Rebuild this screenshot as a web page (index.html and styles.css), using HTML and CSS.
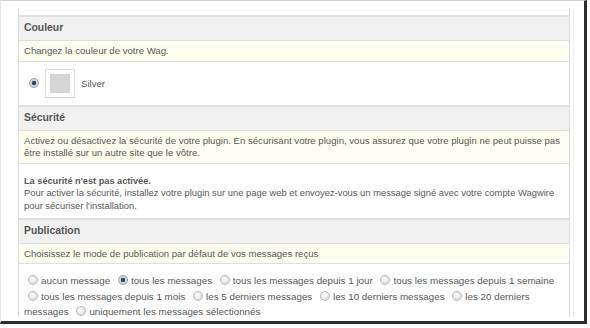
FILE: index.html
```html
<html>
<head>
    <title>Options</title>
    <link rel="stylesheet" href="styles.css">
</head>
<body>
    <div class="frame">
        <div class="outer">
            <div class="panel">
                <div class="head">Couleur</div>
                <div class="note">Changez la couleur de votre Wag.</div>
                <div class="row colors">
                    <span class="radio on"></span>
                    <span class="swatch"><span class="fill"></span></span>
                    <span>Silver</span>
                </div>

                <div class="head">Sécurité</div>
                <div class="note">Activez ou désactivez la sécurité de votre plugin. En sécurisant votre plugin, vous assurez que votre plugin ne peut puisse pas être installé sur un autre site que le vôtre.</div>
                <div class="row text">
                    <b>La sécurité n'est pas activée.</b><br>
                    Pour activer la sécurité, installez votre plugin sur une page web et envoyez-vous un message signé avec votre compte Wagwire pour sécuriser l'installation.
                </div>

                <div class="head">Publication</div>
                <div class="note">Choisissez le mode de publication par défaut de vos messages reçus</div>
                <div class="row options">
                    <label><span class="radio"></span>aucun message</label>
                    <label><span class="radio on"></span>tous les messages</label>
                    <label><span class="radio"></span>tous les messages depuis 1 jour</label>
                    <label><span class="radio"></span>tous les messages depuis 1 semaine</label>
                    <label><span class="radio"></span>tous les messages depuis 1 mois</label>
                    <label><span class="radio"></span>les 5 derniers messages</label>
                    <label><span class="radio"></span>les 10 derniers messages</label>
                    <label><span class="radio"></span>les 20 derniers messages</label>
                    <label><span class="radio"></span>uniquement les messages sélectionnés</label>
                </div>
            </div>
        </div>
    </div>
</body>
</html>
```

FILE: styles.css
```css
* {
    margin: 0px;
    box-sizing: border-box;
}

body {
    background: #ffffff;
    font-family: "Liberation Sans", Arial, sans-serif;
    font-size: 9.6px;
    color: #585858;
}

.frame {
    width: 587px;
    height: 324px;
    border-top: 1px solid #cfcfcf;
    border-left: 1px solid #e4e4e4;
    border-right: 3px solid #2e2e2e;
    border-bottom: 3px solid #2e2e2e;
    padding: 7px 0 0 17px;
    overflow: hidden;
}

.outer {
    width: 556px;
    height: 309px;
    border-right: 1px solid #ececec;
    padding-right: 3px;
}

.panel {
    width: 552px;
    height: 309px;
    border-left: 1px solid #dcdcdc;
    border-right: 1px solid #dcdcdc;
    padding-top: 7px;
}

.head {
    background: #f1f1f1;
    border-top: 2px solid #e0e0e0;
    height: 25px;
    padding: 5px 0 0 5px;
    font-weight: bold;
    font-size: 10.4px;
    color: #555555;
}

.note {
    background: #fefef0;
    border-top: 1px solid #dedede;
    border-bottom: 1px solid #dedede;
    padding: 4px 8px 3px 5px;
    line-height: 12.5px;
}

.row {
    background: #ffffff;
}

.colors {
    height: 43px;
    display: flex;
    align-items: center;
    padding-left: 6px;
}

.swatch {
    width: 30px;
    height: 29px;
    border: 1px solid #d8d8d8;
    margin: 0 6px 0 3px;
    padding: 4px;
    display: flex;
}

.fill {
    flex: 1;
    background: #d6d6d6;
}

.text {
    height: 54px;
    padding: 11px 0 0 5px;
    line-height: 12.5px;
    font-size: 9.4px;
}

.text b {
    font-size: 9.2px;
}

.options {
    padding: 9px 0 0 5px;
    line-height: 15.5px;
    font-size: 9.8px;
}

.options label {
    margin-right: 1px;
}

.radio {
    display: inline-block;
    width: 10px;
    height: 10px;
    border-radius: 50%;
    border: 1px solid #b9b9b9;
    background: radial-gradient(circle at 40% 35%, #ffffff 0%, #e4e4e4 60%, #cfcfcf 100%);
    vertical-align: -1px;
    margin: 0 3px 0 4px;
}

.radio.on {
    border-color: #9aa3ad;
    background: radial-gradient(circle, #1f3c52 0%, #2d5673 35%, #c6ccd3 45%, #e8eaee 100%);
}
```
